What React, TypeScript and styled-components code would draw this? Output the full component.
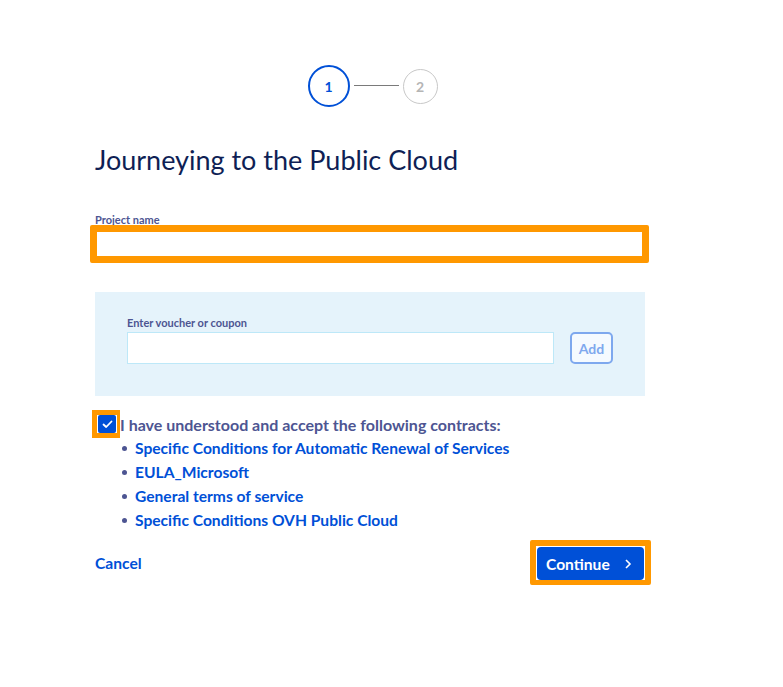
import React from "react";
import styled, { createGlobalStyle } from "styled-components";

const Global = createGlobalStyle`
  html, body { margin: 0; padding: 0; background: #fff; }
  body { font-family: "Lato", "Liberation Sans", sans-serif; }
  * { box-sizing: border-box; }
`;

const Page = styled.div`
  width: 783px;
  height: 687px;
  padding: 65px 0 0 95px;
`;

const Column = styled.div`
  width: 550px;
  display: flex;
  flex-direction: column;
`;

const Stepper = styled.div`
  display: flex;
  align-items: center;
  justify-content: center;
  padding-left: 5px;
`;

const Step = styled.div<{ $active?: boolean }>`
  width: ${(p) => (p.$active ? 42 : 35)}px;
  height: ${(p) => (p.$active ? 42 : 35)}px;
  border-radius: 50%;
  border: ${(p) => (p.$active ? 2 : 1)}px solid ${(p) => (p.$active ? "#0050d7" : "#c8c8c8")};
  color: ${(p) => (p.$active ? "#0050d7" : "#b5b5b5")};
  font-weight: 700;
  font-size: 14px;
  display: flex;
  align-items: center;
  justify-content: center;
`;

const StepLine = styled.div`
  width: 45px;
  height: 1px;
  background: #7a7a7a;
  margin: 0 4px 2px;
`;

const Title = styled.h1`
  margin: 37px 0 0;
  font-size: 27px;
  font-weight: 400;
  color: #0f1f55;
  line-height: 32px;
`;

const Label = styled.label`
  display: block;
  font-size: 11px;
  font-weight: 700;
  color: #4d5592;
  line-height: 14px;
`;

const ProjectLabel = styled(Label)`
  margin-top: 37px;
`;

const HighlightInput = styled.input`
  display: block;
  margin: -2px 0 0 -5px;
  width: 559px;
  height: 38px;
  border: 7px solid #ff9800;
  border-radius: 2px;
  background: #fff;
  outline: none;
`;

const Voucher = styled.div`
  margin-top: 29px;
  background: #e5f3fb;
  height: 104px;
  padding: 24px 32px 0;
`;

const VoucherRow = styled.div`
  display: flex;
  align-items: center;
  gap: 16px;
  margin-top: 2px;
`;

const VoucherInput = styled.input`
  width: 427px;
  height: 32px;
  border: 1px solid #bde8f8;
  background: #fff;
  outline: none;
`;

const AddButton = styled.button`
  width: 43px;
  height: 32px;
  border: 2px solid #7ea8ee;
  border-radius: 5px;
  background: #f5faff;
  color: #7ea8ee;
  font-family: inherit;
  font-weight: 700;
  font-size: 14px;
  padding: 0;
`;

const AcceptRow = styled.div`
  display: flex;
  align-items: center;
  margin: 14px 0 0 -3px;
`;

const CheckFrame = styled.div`
  width: 28px;
  height: 28px;
  border: 5px solid #ff9800;
  border-right-width: 3px;
  background: #fff;
  display: flex;
  align-items: center;
  justify-content: center;
`;

const CheckBox = styled.div`
  width: 18px;
  height: 18px;
  background: #0050d7;
  border-radius: 2px;
  display: flex;
  align-items: center;
  justify-content: center;
`;

const AcceptText = styled.span`
  font-size: 16px;
  font-weight: 700;
  color: #4d5592;
`;

const Contracts = styled.ul`
  margin: -2px 0 0;
  padding: 0 0 0 40px;
  list-style: none;
  display: flex;
  flex-direction: column;
`;

const Contract = styled.li`
  position: relative;
  height: 24px;
  line-height: 24px;
  font-size: 15.6px;
  font-weight: 700;
  &::before {
    content: "";
    position: absolute;
    left: -13px;
    top: 10px;
    width: 5px;
    height: 5px;
    border-radius: 50%;
    background: #4d5592;
  }
`;

const Link = styled.a`
  color: #0050d7;
  text-decoration: none;
`;

const Footer = styled.div`
  display: flex;
  align-items: center;
  justify-content: space-between;
  margin-top: 8px;
  margin-right: -6px;
`;

const CancelLink = styled(Link)`
  font-size: 15.6px;
  font-weight: 700;
`;

const ContinueFrame = styled.div`
  border: 6px solid #ff9800;
  border-bottom-width: 5px;
  border-radius: 2px;
  padding: 1px 1px 0;
  background: #fff;
`;

const ContinueButton = styled.button`
  display: flex;
  align-items: center;
  gap: 14px;
  height: 33px;
  width: 107px;
  padding: 0 0 0 9px;
  background: #0050d7;
  border: none;
  border-radius: 4px;
  color: #fff;
  font-family: inherit;
  font-weight: 700;
  font-size: 15.6px;
`;

const contracts = [
  "Specific Conditions for Automatic Renewal of Services",
  "EULA_Microsoft",
  "General terms of service",
  "Specific Conditions OVH Public Cloud",
];

export default function App() {
  return (
    <Page>
      <Global />
      <Column>
        <Stepper>
          <Step $active>1</Step>
          <StepLine />
          <Step>2</Step>
        </Stepper>
        <Title>Journeying to the Public Cloud</Title>
        <ProjectLabel>Project name</ProjectLabel>
        <HighlightInput />
        <Voucher>
          <Label>Enter voucher or coupon</Label>
          <VoucherRow>
            <VoucherInput />
            <AddButton>Add</AddButton>
          </VoucherRow>
        </Voucher>
        <AcceptRow>
          <CheckFrame>
            <CheckBox>
              <svg width="11" height="9" viewBox="0 0 11 9">
                <path d="M1.5 4.5 L4.2 7 L9.5 1.5" fill="none" stroke="#fff" strokeWidth="1.8" strokeLinecap="round" strokeLinejoin="round" />
              </svg>
            </CheckBox>
          </CheckFrame>
          <AcceptText>I have understood and accept the following contracts:</AcceptText>
        </AcceptRow>
        <Contracts>
          {contracts.map((c) => (
            <Contract key={c}>
              <Link href="#">{c}</Link>
            </Contract>
          ))}
        </Contracts>
        <Footer>
          <CancelLink href="#">Cancel</CancelLink>
          <ContinueFrame>
            <ContinueButton>
              Continue
              <svg width="8" height="12" viewBox="0 0 8 12">
                <path d="M2 2 L6 6 L2 10" fill="none" stroke="#fff" strokeWidth="1.6" />
              </svg>
            </ContinueButton>
          </ContinueFrame>
        </Footer>
      </Column>
    </Page>
  );
}
